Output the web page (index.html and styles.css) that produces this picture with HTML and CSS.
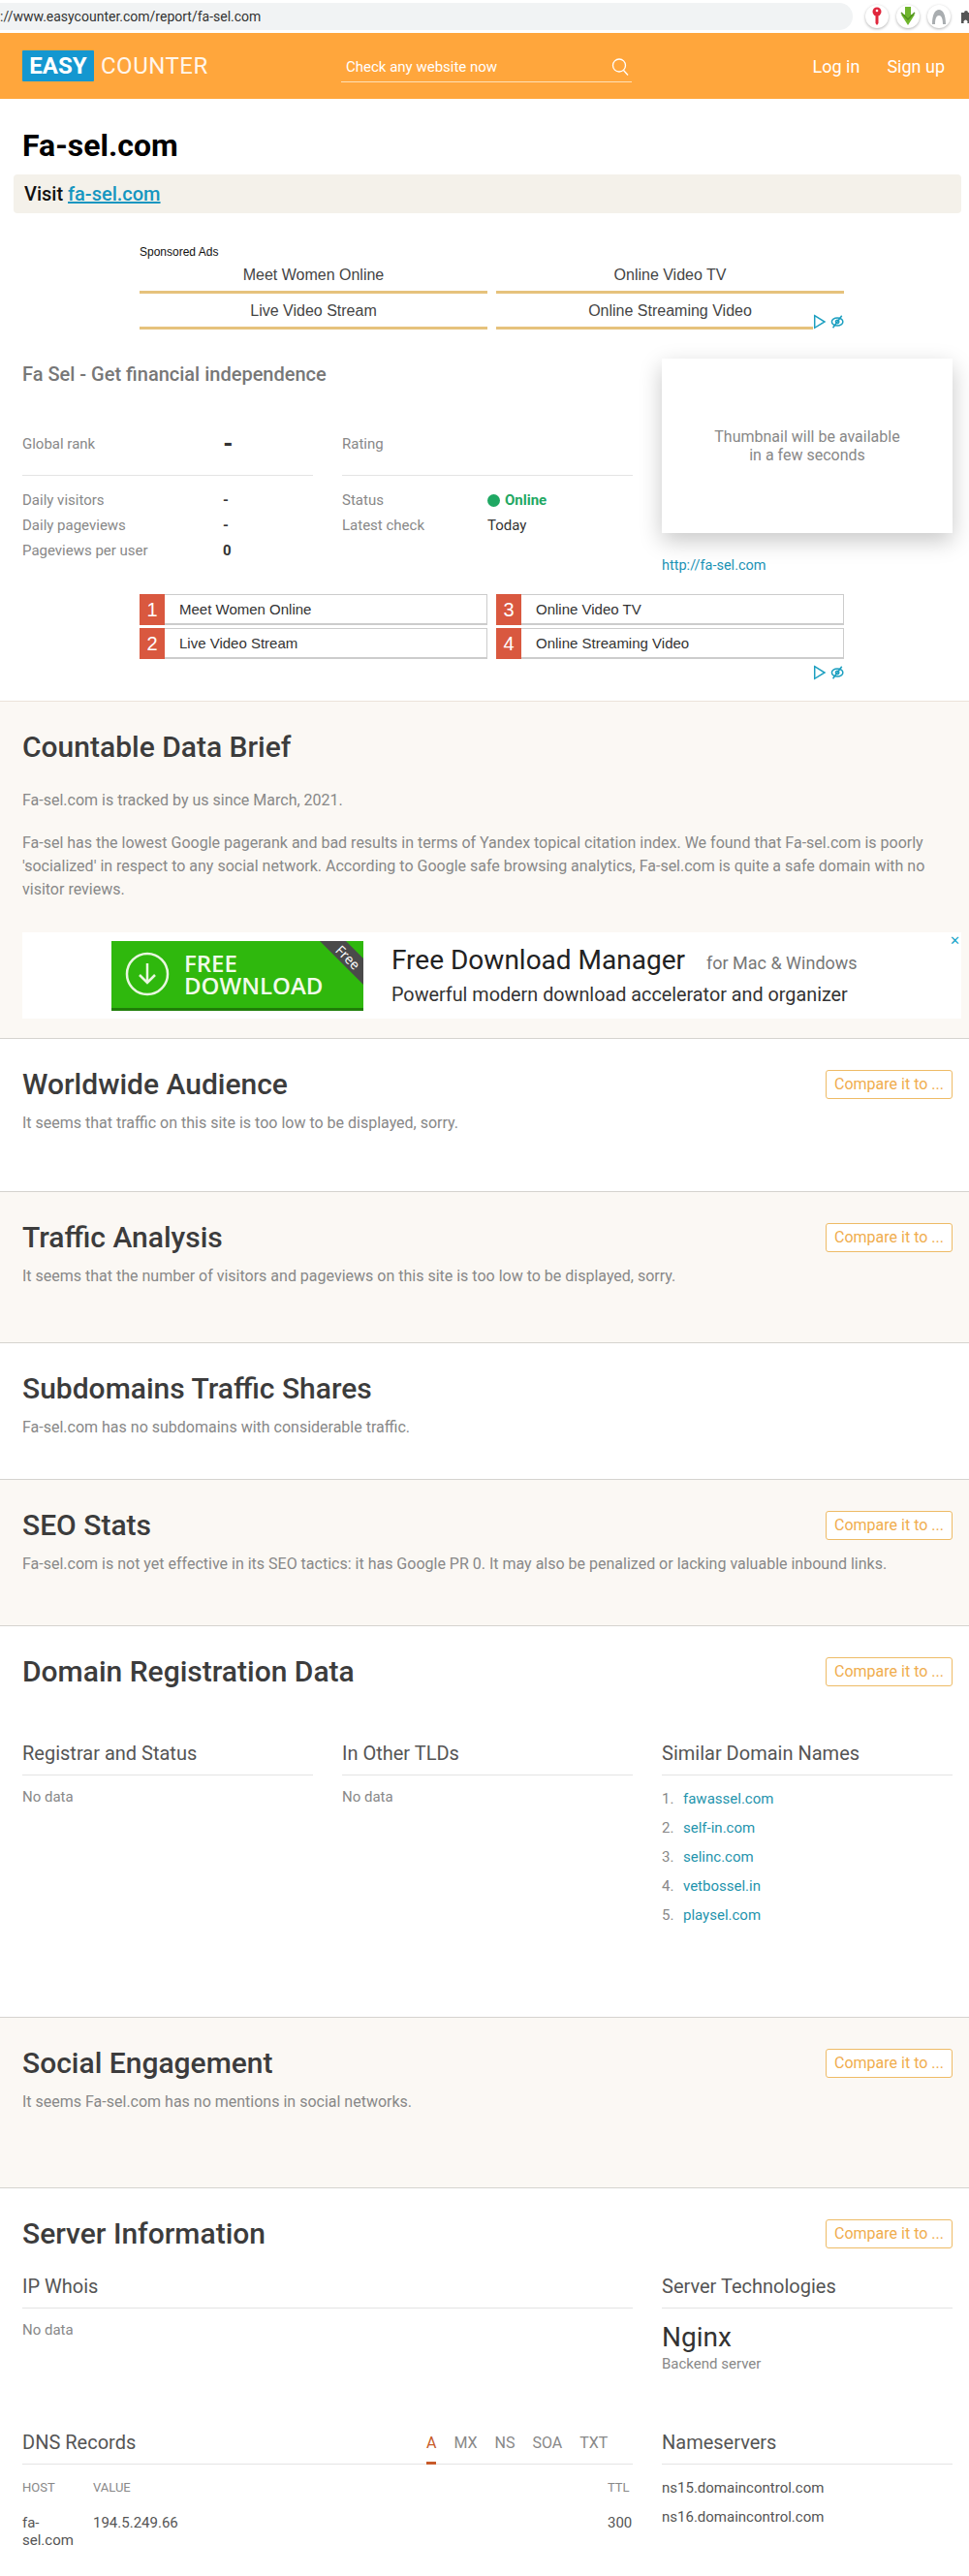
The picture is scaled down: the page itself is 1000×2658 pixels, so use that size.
FILE: index.html
```html
<!DOCTYPE html>
<html lang="en">
<head>
  <meta charset="UTF-8">
  <title>Fa-sel.com - Easy Counter</title>
  <link rel="stylesheet" href="styles.css">
</head>
<body>

  <!-- Browser Bar -->
  <div class="browser-bar">
    <div class="url-field">://www.easycounter.com/report/fa-sel.com</div>
    <span class="ext-icon">
      <svg width="14" height="20" viewBox="0 0 14 20"><circle cx="7" cy="5" r="4.5" fill="#e0263c"/><path d="M5.5 8h3v9l-1.5 2-1.5-2z" fill="#e0263c"/><circle cx="7" cy="4" r="1.3" fill="#fff"/></svg>
    </span>
    <span class="ext-icon">
      <svg width="16" height="20" viewBox="0 0 16 20"><path d="M5 0h6v8h4l-7 11-7-11h4z" fill="#6fb52c"/><path d="M1 6l7 7 7-7" fill="none" stroke="#4f8f1c" stroke-width="1.5"/></svg>
    </span>
    <span class="ext-icon">
      <svg width="16" height="18" viewBox="0 0 16 18"><path d="M1 17C1 7 4 2 8 2s7 5 7 15h-3c0-6-1.500-9-4-9s-4 3-4 9z" fill="#a9adb0"/></svg>
    </span>
    <svg class="puzzle" width="14" height="18" viewBox="0 0 14 18"><path d="M2 5h3a2 2 0 1 1 4 0h3v4a2 2 0 1 1 0 4v3H8a2 2 0 1 0-3 0H2z" fill="#555"/></svg>
  </div>

  <!-- Header Section -->
  <header class="site-header">
    <a class="logo" href="#"><span class="logo-easy">EASY</span><span class="logo-counter">COUNTER</span></a>
    <div class="search">
      <span>Check any website now</span>
      <svg width="20" height="20" viewBox="0 0 20 20" fill="none" stroke="#fff" stroke-width="1.3"><circle cx="9" cy="8.500" r="6.500"/><path d="M13.500 13.500l4.500 5"/></svg>
    </div>
    <nav class="top-nav">
      <a href="#">Log in</a>
      <a href="#">Sign up</a>
    </nav>
  </header>

  <h1 class="site-title">Fa-sel.com</h1>
  <div class="visit-box">Visit <a href="#">fa-sel.com</a></div>

  <!-- Top Ads -->
  <div class="ads ads-top">
    <div class="ads-label">Sponsored Ads</div>
    <div class="ads-grid">
      <a class="ad-line" href="#">Meet Women Online</a>
      <a class="ad-line" href="#">Online Video TV</a>
      <a class="ad-line" href="#">Live Video Stream</a>
      <a class="ad-line" href="#">Online Streaming Video</a>
    </div>
    <div class="ad-marks ad-marks-over">
      <svg width="32" height="16" viewBox="0 0 28 14" fill="none" stroke="#1c9fc0" stroke-width="1.300"><path d="M1.500 1.500l9 5.500-9 5.500z"/><ellipse cx="22" cy="7" rx="5" ry="3.500"/><circle cx="22" cy="7" r="1.500"/><path d="M26 1.500l-8 11"/></svg>
    </div>
  </div>

  <!-- Overview -->
  <div class="overview">
    <div class="overview-left">
      <h2 class="site-tagline">Fa Sel - Get financial independence</h2>
      <div class="stats">
        <div class="stats-col">
          <div class="stat-row stat-rank"><span class="stat-label">Global rank</span><b class="stat-value stat-dash">-</b></div>
          <div class="stat-row"><span class="stat-label">Daily visitors</span><b class="stat-value">-</b></div>
          <div class="stat-row"><span class="stat-label">Daily pageviews</span><b class="stat-value">-</b></div>
          <div class="stat-row"><span class="stat-label">Pageviews per user</span><b class="stat-value">0</b></div>
        </div>
        <div class="stats-col stats-col-right">
          <div class="stat-row stat-rank"><span class="stat-label">Rating</span></div>
          <div class="stat-row"><span class="stat-label">Status</span><span class="stat-value online"><i class="dot"></i>Online</span></div>
          <div class="stat-row"><span class="stat-label">Latest check</span><span class="stat-value">Today</span></div>
        </div>
      </div>
    </div>
    <div class="overview-right">
      <div class="thumb">Thumbnail will be available<br>in a few seconds</div>
      <a class="thumb-link" href="#">http://fa-sel.com</a>
    </div>
  </div>

  <!-- Numbered Ads -->
  <div class="ads ads-numbered">
    <div class="ads-grid">
      <a class="ad-num" href="#"><span class="num">1</span>Meet Women Online</a>
      <a class="ad-num" href="#"><span class="num">3</span>Online Video TV</a>
      <a class="ad-num" href="#"><span class="num">2</span>Live Video Stream</a>
      <a class="ad-num" href="#"><span class="num">4</span>Online Streaming Video</a>
    </div>
    <div class="ad-marks">
      <svg width="32" height="16" viewBox="0 0 28 14" fill="none" stroke="#1c9fc0" stroke-width="1.300"><path d="M1.500 1.500l9 5.500-9 5.500z"/><ellipse cx="22" cy="7" rx="5" ry="3.500"/><circle cx="22" cy="7" r="1.500"/><path d="M26 1.500l-8 11"/></svg>
    </div>
  </div>

  <!-- Countable Data Brief -->
  <section class="section alt sec-brief">
    <h2>Countable Data Brief</h2>
    <p class="brief-first">Fa-sel.com is tracked by us since March, 2021.</p>
    <p>Fa-sel has the lowest Google pagerank and bad results in terms of Yandex topical citation index. We found that Fa-sel.com is poorly 'socialized' in respect to any social network. According to Google safe browsing analytics, Fa-sel.com is quite a safe domain with no visitor reviews.</p>
    <div class="banner">
      <div class="dl-button">
        <svg class="dl-circle" width="46" height="46" viewBox="0 0 46 46" fill="none" stroke="#e9f7e0" stroke-width="2.500"><circle cx="23" cy="23" r="21"/><path d="M23 12v20M15 24l8 8 8-8"/></svg>
        <div class="dl-text">FREE<br>DOWNLOAD</div>
        <svg class="dl-ribbon" width="260" height="72" viewBox="0 0 260 72"><polygon points="215,0 242,0 260,18 260,45" fill="#4a4a4a"/><text x="244" y="22" transform="rotate(45 244 17)" text-anchor="middle" fill="#fff" font-size="14" font-family="Open Sans, sans-serif">Free</text></svg>
      </div>
      <div class="banner-copy">
        <div class="banner-title">Free Download Manager <span>for Mac &amp; Windows</span></div>
        <div class="banner-sub">Powerful modern download accelerator and organizer</div>
      </div>
      <span class="banner-close">&#10005;</span>
    </div>
  </section>

  <section class="section sec-audience">
    <div class="section-head"><h2>Worldwide Audience</h2><a class="compare" href="#">Compare it to ...</a></div>
    <p>It seems that traffic on this site is too low to be displayed, sorry.</p>
  </section>

  <section class="section alt sec-traffic">
    <div class="section-head"><h2>Traffic Analysis</h2><a class="compare" href="#">Compare it to ...</a></div>
    <p>It seems that the number of visitors and pageviews on this site is too low to be displayed, sorry.</p>
  </section>

  <section class="section sec-subdomains">
    <div class="section-head"><h2>Subdomains Traffic Shares</h2></div>
    <p>Fa-sel.com has no subdomains with considerable traffic.</p>
  </section>

  <section class="section alt sec-seo">
    <div class="section-head"><h2>SEO Stats</h2><a class="compare" href="#">Compare it to ...</a></div>
    <p>Fa-sel.com is not yet effective in its SEO tactics: it has Google PR 0. It may also be penalized or lacking valuable inbound links.</p>
  </section>

  <section class="section sec-domain">
    <div class="section-head"><h2>Domain Registration Data</h2><a class="compare" href="#">Compare it to ...</a></div>
    <div class="three-cols">
      <div>
        <h3>Registrar and Status</h3>
        <p class="small">No data</p>
      </div>
      <div>
        <h3>In Other TLDs</h3>
        <p class="small">No data</p>
      </div>
      <div>
        <h3>Similar Domain Names</h3>
        <ol class="similar">
          <li><a href="#">fawassel.com</a></li>
          <li><a href="#">self-in.com</a></li>
          <li><a href="#">selinc.com</a></li>
          <li><a href="#">vetbossel.in</a></li>
          <li><a href="#">playsel.com</a></li>
        </ol>
      </div>
    </div>
  </section>

  <section class="section alt sec-social">
    <div class="section-head"><h2>Social Engagement</h2><a class="compare" href="#">Compare it to ...</a></div>
    <p>It seems Fa-sel.com has no mentions in social networks.</p>
  </section>

  <section class="section sec-server">
    <div class="section-head"><h2>Server Information</h2><a class="compare" href="#">Compare it to ...</a></div>
    <div class="server-grid server-top">
      <div>
        <h3>IP Whois</h3>
        <p class="small">No data</p>
      </div>
      <div>
        <h3>Server Technologies</h3>
        <div class="tech-name">Nginx</div>
        <div class="tech-role">Backend server</div>
      </div>
    </div>
    <div class="server-grid">
      <div>
        <div class="dns-head">
          <h3>DNS Records</h3>
          <div class="dns-tabs">
            <a class="active" href="#">A</a>
            <a href="#">MX</a>
            <a href="#">NS</a>
            <a href="#">SOA</a>
            <a href="#">TXT</a>
          </div>
        </div>
        <table class="dns-table">
          <tr><th class="col-host">HOST</th><th>VALUE</th><th class="col-ttl">TTL</th></tr>
          <tr><td class="col-host">fa-sel.com</td><td>194.5.249.66</td><td class="col-ttl">300</td></tr>
        </table>
      </div>
      <div>
        <h3>Nameservers</h3>
        <div class="ns-list">
          <div>ns15.domaincontrol.com</div>
          <div>ns16.domaincontrol.com</div>
        </div>
      </div>
    </div>
  </section>

</body>
</html>
```

FILE: styles.css
```css
/* Global Styles */
body {
  font-family: Roboto, Arial, sans-serif;
  margin: 0;
  padding: 0;
  background-color: #fff;
  color: #333;
}

a {
  text-decoration: none;
}

h1, h2, h3, p {
  margin: 0;
}

/* Browser Bar */
.browser-bar {
  height: 34px;
  display: flex;
  align-items: center;
  overflow: hidden;
}

.url-field {
  width: 880px;
  height: 28px;
  flex-shrink: 0;
  background-color: #f1f3f4;
  border-radius: 0 14px 14px 0;
  font-size: 14px;
  line-height: 28px;
  color: #333;
  white-space: nowrap;
}

.ext-icon {
  width: 24px;
  height: 24px;
  flex-shrink: 0;
  margin-left: 8px;
  border-radius: 50%;
  background-color: #fff;
  box-shadow: 0 1px 3px rgba(0, 0, 0, 0.3);
  display: flex;
  align-items: center;
  justify-content: center;
}

.ext-icon:first-of-type {
  margin-left: 13px;
}

.puzzle {
  flex-shrink: 0;
  margin-left: 9px;
}

/* Header Section */
.site-header {
  height: 68px;
  background-color: #ffa63c;
  display: flex;
  align-items: center;
  padding-left: 23px;
  padding-right: 25px;
}

.logo {
  width: 329px;
  display: flex;
  align-items: center;
}

.logo-easy {
  width: 74px;
  height: 32px;
  background-color: #1497d0;
  color: #fff;
  font-weight: 700;
  font-size: 24px;
  line-height: 32px;
  text-align: center;
  border-radius: 1px;
}

.logo-counter {
  margin-left: 7px;
  color: #fff;
  font-size: 24px;
  letter-spacing: 0.5px;
  opacity: 0.9;
}

.search {
  width: 300px;
  height: 32px;
  box-sizing: border-box;
  padding: 0 2px 0 5px;
  margin-top: 2px;
  border-bottom: 1px solid #ffe0b5;
  color: #fff;
  font-size: 15px;
  display: flex;
  align-items: center;
  justify-content: space-between;
}

.top-nav {
  margin-left: auto;
  display: flex;
  gap: 28px;
}

.top-nav a {
  color: #fff;
  font-size: 18px;
}

.site-title {
  margin: 29px 0 0 23px;
  font-size: 32px;
  line-height: 38px;
  font-weight: 700;
  color: #000;
}

.visit-box {
  margin: 11px 8px 0 14px;
  height: 40px;
  padding-left: 11px;
  background-color: #f4f1ea;
  border-radius: 4px;
  font-size: 20px;
  font-weight: 500;
  line-height: 40px;
  color: #111;
}

.visit-box a {
  color: #1596c0;
  text-decoration: underline;
}

/* Ads */
.ads {
  width: 727px;
  margin-left: 144px;
  position: relative;
  font-family: "Liberation Sans", Arial, sans-serif;
}

.ads-top {
  margin-top: 32px;
}

.ads-label {
  font-size: 12px;
  line-height: 16px;
  color: #111;
}

.ads-grid {
  display: grid;
  grid-template-columns: 359px 359px;
  column-gap: 9px;
}

.ads-top .ads-grid {
  row-gap: 2px;
}

.ad-line {
  height: 32px;
  border-bottom: 3px solid #e6c27c;
  text-align: center;
  font-size: 16px;
  line-height: 32px;
  color: #444;
}

.ad-marks {
  height: 16px;
  margin-top: 3px;
  text-align: right;
  line-height: 16px;
}

.ad-marks-over {
  position: absolute;
  right: 0;
  bottom: 0;
  margin: 0;
  background-color: #fff;
}

/* Overview */
.overview {
  margin-top: 30px;
  padding-left: 23px;
  display: grid;
  grid-template-columns: 630px 300px;
  column-gap: 30px;
}

.site-tagline {
  margin-top: 4px;
  font-size: 20px;
  line-height: 24px;
  font-weight: 500;
  color: #777;
}

.stats {
  margin-top: 48px;
  display: grid;
  grid-template-columns: 300px 300px;
  column-gap: 30px;
  font-size: 15px;
}

.stat-row {
  height: 26px;
  display: flex;
  align-items: center;
}

.stat-rank {
  height: 44px;
  align-items: flex-start;
  line-height: 24px;
  border-bottom: 1px solid #e4e4e4;
  margin-bottom: 12px;
}

.stat-label {
  width: 207px;
  color: #888;
}

.stats-col-right .stat-label {
  width: 150px;
}

.stat-value {
  color: #333;
}

.stat-dash {
  font-size: 24px;
  font-weight: 900;
}

.online {
  color: #1fa863;
  font-weight: 700;
  display: flex;
  align-items: center;
}

.dot {
  width: 13px;
  height: 13px;
  margin-right: 5px;
  border-radius: 50%;
  background-color: #1fa863;
}

.thumb {
  height: 180px;
  box-shadow: 0 8px 22px rgba(0, 0, 0, 0.22);
  display: flex;
  align-items: center;
  justify-content: center;
  text-align: center;
  font-size: 16px;
  line-height: 19px;
  color: #888;
}

.thumb-link {
  display: block;
  margin-top: 24px;
  font-size: 14.5px;
  line-height: 20px;
  color: #1b93b5;
}

/* Numbered Ads */
.ads-numbered {
  margin-top: 19px;
}

.ad-num {
  height: 29px;
  margin-bottom: 3px;
  border: 1px solid #ccc;
  border-bottom-width: 2px;
  border-left: 0;
  display: flex;
  align-items: center;
  font-size: 15px;
  color: #333;
}

.num {
  width: 26px;
  height: 32px;
  margin-right: 15px;
  background-color: #d9583f;
  color: #fff;
  font-size: 20px;
  line-height: 32px;
  text-align: center;
}

/* Sections */
.section {
  padding: 29px 17px 0 23px;
  border-bottom: 1px solid #d5d3cf;
}

.section.alt {
  background-color: #fbf8f4;
}

.section h2 {
  font-size: 30px;
  line-height: 36px;
  font-weight: 500;
  color: #3c3c3c;
}

.section p {
  margin-top: 10px;
  font-size: 16px;
  line-height: 24px;
  color: #888;
}

.section-head {
  display: flex;
  justify-content: space-between;
  align-items: center;
}

.compare {
  width: 131px;
  height: 30px;
  box-sizing: border-box;
  border: 1px solid #eebb66;
  border-radius: 3px;
  background-color: #fff;
  font-size: 16px;
  line-height: 28px;
  text-align: center;
  color: #f0ad4e;
}

.sec-brief {
  margin-top: 21px;
  padding-bottom: 20px;
  border-top: 1px solid #ece3da;
}

.sec-brief .brief-first {
  margin-top: 25px;
}

.sec-brief p {
  margin-top: 20px;
}

.sec-audience {
  padding-bottom: 58px;
}

.sec-traffic {
  padding-bottom: 56px;
}

.sec-subdomains {
  padding-bottom: 41px;
}

.sec-seo {
  padding-bottom: 51px;
}

.sec-domain {
  padding-bottom: 90px;
}

.sec-social {
  padding-bottom: 76px;
}

.sec-server {
  border-bottom: 0;
}

/* Banner */
.banner {
  height: 89px;
  margin: 32px -9px 0 0;
  background-color: #fff;
  display: flex;
  align-items: center;
  position: relative;
}

.dl-button {
  width: 260px;
  height: 72px;
  box-sizing: border-box;
  margin-left: 92px;
  background-color: #2fb80d;
  border-bottom: 3px solid #1f7f08;
  color: #f1fbe9;
  display: flex;
  align-items: center;
  position: relative;
  overflow: hidden;
}

.dl-circle {
  margin-left: 14px;
}

.dl-text {
  margin-left: 15px;
  font-family: "Open Sans", sans-serif;
  font-size: 24px;
  font-weight: 600;
  line-height: 23px;
}

.dl-ribbon {
  position: absolute;
  top: 0;
  left: 0;
}

.banner-copy {
  margin-left: 29px;
  color: #222;
}

.banner-title {
  font-size: 28px;
  line-height: 36px;
}

.banner-title span {
  margin-left: 15px;
  font-size: 18px;
  color: #777;
}

.banner-sub {
  margin-top: 2px;
  font-size: 19.800px;
  line-height: 26px;
  color: #333;
}

.banner-close {
  position: absolute;
  top: 1px;
  right: 1px;
  font-size: 13px;
  color: #18a5c9;
}

/* Columns */
.three-cols {
  margin-top: 52px;
  display: grid;
  grid-template-columns: 300px 300px 300px;
  column-gap: 30px;
}

.section h3 {
  height: 36px;
  font-size: 20px;
  line-height: 28px;
  font-weight: 400;
  color: #555;
  border-bottom: 1px solid #e4e4e4;
}

.section p.small {
  margin-top: 11px;
  font-size: 15px;
  line-height: 22px;
  color: #888;
}

.similar {
  list-style: none;
  margin: 9px 0 0;
  padding: 0;
  counter-reset: item;
}

.similar li {
  height: 30px;
  line-height: 30px;
  font-size: 15px;
  color: #888;
  counter-increment: item;
}

.similar li::before {
  content: counter(item) ".";
  display: inline-block;
  width: 22px;
}

.similar a {
  color: #1f94ad;
}

/* Server Information */
.server-grid {
  display: grid;
  grid-template-columns: 630px 300px;
  column-gap: 30px;
}

.server-top {
  margin-top: 22px;
  height: 161px;
}

.tech-name {
  margin-top: 12px;
  font-size: 28px;
  line-height: 36px;
  color: #333;
}

.tech-role {
  font-size: 15px;
  line-height: 18px;
  color: #888;
}

.dns-head {
  position: relative;
}

.dns-tabs {
  position: absolute;
  top: 0;
  left: 417px;
  display: flex;
  gap: 18px;
  height: 37px;
}

.dns-tabs a {
  font-size: 16px;
  line-height: 30px;
  color: #888;
}

.dns-tabs a.active {
  height: 37px;
  color: #c75b2a;
  border-bottom: 3px solid #c75b2a;
  box-sizing: border-box;
}

.dns-table {
  width: 630px;
  margin-top: 7px;
  border-collapse: collapse;
  table-layout: fixed;
  font-size: 15px;
  color: #555;
}

.dns-table th {
  height: 32px;
  padding: 0;
  text-align: left;
  font-size: 13px;
  font-weight: 400;
  color: #888;
}

.dns-table td {
  padding: 12px 0 0;
  line-height: 18px;
  vertical-align: top;
}

.col-host {
  width: 73px;
  box-sizing: border-box;
  padding-right: 12px !important;
}

.col-ttl {
  width: 26px;
}

.ns-list {
  margin-top: 12px;
  font-size: 15px;
  color: #555;
}

.ns-list div {
  height: 30px;
  line-height: 24px;
}
```
